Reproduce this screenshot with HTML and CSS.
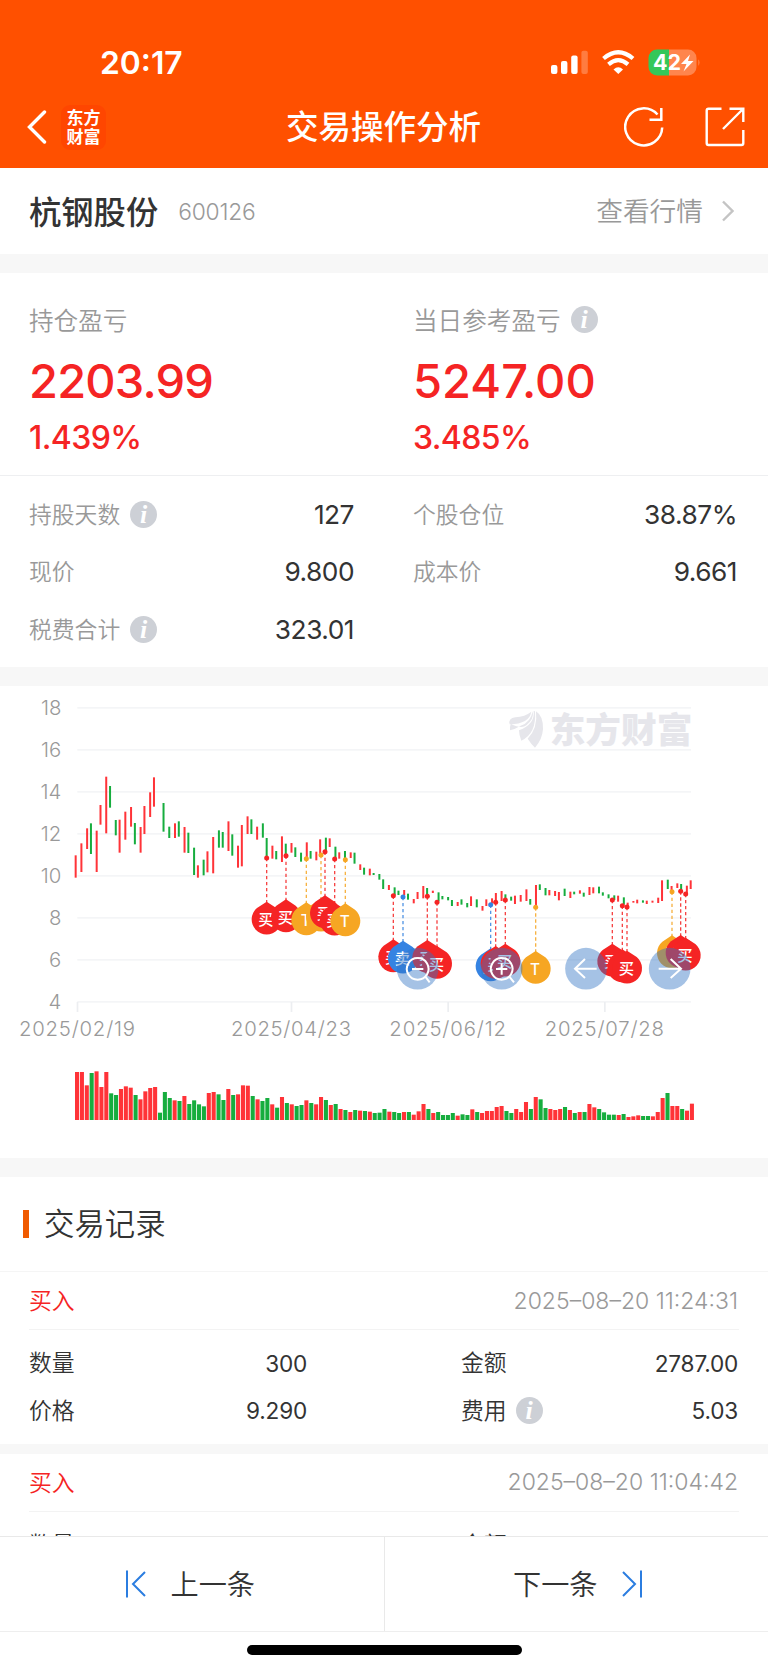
FILE: index.html
```html
<!DOCTYPE html>
<html lang="zh-CN">

<head>
    <meta charset="UTF-8">
    <meta name="viewport" content="width=device-width, initial-scale=1.0">
    <title>交易操作分析</title>
    <link rel="stylesheet" href="styles.css">
</head>

<body>
    <div class="header">
        <div class="status">
            <span class="clock">20:17</span>
            <svg class="statusIcons" viewBox="0 0 150 28" width="150" height="28">
                <g fill="#fff">
                    <rect x="0" y="16" width="6.4" height="9" rx="2" />
                    <rect x="10" y="12" width="6.4" height="13" rx="2" />
                    <rect x="20.2" y="6.5" width="6.4" height="18.5" rx="2" />
                    <rect x="30.4" y="1.7" width="6.4" height="23.3" rx="2" opacity=".25" />
                    <path d="M62.500 20.500 L67.300 25 L72 20.500 Q67.300 16 62.500 20.500Z" />
                </g>
                <g fill="none" stroke="#fff" stroke-width="4.200">
                    <path d="M52.500 9.500 Q67.300 -3 82 9.500" />
                    <path d="M57.500 15.300 Q67.300 7 77 15.300" />
                </g>
                <clipPath id="bat"><rect x="97.500" y="0.500" width="48" height="26" rx="8.500" /></clipPath>
                <g clip-path="url(#bat)">
                    <rect x="97" y="0" width="21" height="28" fill="#34c759" />
                    <rect x="118" y="0" width="30" height="28" fill="#ff854d" />
                </g>
                <path d="M147.300 10.300 q2.500 3 0 6.800z" fill="#ff854d" />
                <text class="batteryText" x="102" y="21.300">42</text>
                <path d="M139 5.500 L130 15 h5.500 L132.500 22.500 L142.500 12 h-5.500z" fill="#fff" />
            </svg>
        </div>
        <div class="navBar">
            <svg class="back" viewBox="0 0 20 34" width="20" height="34">
                <path d="M17.500 2 L2.500 17 L17.500 32" fill="none" stroke="#fff" stroke-width="3.400" stroke-linecap="round" />
            </svg>
            <div class="logo">东方<br>财富</div>
            <div class="pageTitle">交易操作分析</div>
            <svg class="refresh" viewBox="0 0 40 40" width="40" height="40">
                <path d="M38.200 20.500 A18.500 18.500 0 1 1 33.500 7.500 M37.300 1 V12.700 H25.500" fill="none" stroke="#fff" stroke-width="2.500" />
            </svg>
            <svg class="share" viewBox="0 0 40 40" width="40" height="40">
                <path d="M16.500 1.700 H3.500 Q1.700 1.700 1.700 3.500 V36 Q1.700 38 3.500 38 H36.500 Q38.300 38 38.300 36 V23 M38.300 15 V1.700 H24.500 M38 2 L18 22" fill="none" stroke="#fff" stroke-width="2.400" />
            </svg>
        </div>
    </div>

    <div class="stock">
        <span class="stockName">杭钢股份</span>
        <span class="stockCode">600126</span>
        <span class="quote">查看行情</span>
        <svg viewBox="0 0 12 22" width="12" height="22">
            <path d="M1 1.500 L10.500 11 L1 20.500" fill="none" stroke="#c4c4c4" stroke-width="2.400" />
        </svg>
    </div>

    <div class="profit">
        <div class="profitCol">
            <div class="profitLabel">持仓盈亏</div>
            <div class="profitNum tight">2203.99</div>
            <div class="profitRate">1.439%</div>
        </div>
        <div class="profitCol">
            <div class="profitLabel">当日参考盈亏<i class="info">i</i></div>
            <div class="profitNum">5247.00</div>
            <div class="profitRate">3.485%</div>
        </div>
    </div>
    <div class="detail">
        <div class="item"><span>持股天数</span><i class="info">i</i><b>127</b></div>
        <div class="item"><span>个股仓位</span><b>38.87%</b></div>
        <div class="item"><span>现价</span><b>9.800</b></div>
        <div class="item"><span>成本价</span><b>9.661</b></div>
        <div class="item"><span>税费合计</span><i class="info">i</i><b>323.01</b></div>
    </div>

    <!-- K线图 -->
    <div class="chartBox">
        <svg class="chart" id="chart" viewBox="0 18 2304 1416" width="768" height="472">
            <g id="grid"></g>
            <g class="watermark">
                <path d="M1529 133 Q1524 115 1546 112 Q1575 110 1594 95 Q1588 131 1529 133Z M1598 94 Q1603 117 1579 136 Q1565 147 1532 132 Q1529 142 1530 151 Q1546 147 1562 137 Q1592 128 1598 94Z" />
                <path d="M1601 93 Q1606 132 1557 151 Q1557 166 1564 182 Q1610 161 1605 94Z" />
                <path d="M1608 94 Q1614 145 1583 176 Q1594 193 1605 203 Q1627 178 1629 147 Q1630 108 1608 94Z" />
                <text x="1649" y="188" textLength="428">东方财富</text>
            </g>
            <g id="candles"></g>
            <g id="volumes"></g>
            <g id="marks"></g>
            <g class="tools">
                <circle cx="1253" cy="866" r="62.500" />
                <circle cx="1505" cy="866" r="62.500" />
                <circle cx="1758" cy="866" r="62.500" />
                <circle cx="2009" cy="866" r="62.500" />
                <path d="M1253 834 a32.500 32.500 0 1 0 .1 0 M1276 890 L1289 907 M1236 867 H1270" />
                <path d="M1505 834 a32.500 32.500 0 1 0 .1 0 M1528 890 L1542 907 M1488 867 H1522 M1505 850 V884" />
                <path d="M1790 866 H1725 M1755 837 L1725 866 L1755 894" />
                <path d="M1976 866 H2043 M2012 837 L2043 866 L2012 894" />
            </g>
        </svg>
    </div>

    <div class="recordTitle">交易记录</div>
    <div class="record">
        <div class="recordHead"><span class="buy">买入</span><span class="time">2025–08–20 11:24:31</span></div>
        <div class="recordBody">
            <div class="cell"><span>数量</span><b>300</b></div>
            <div class="cell"><span>金额</span><b>2787.00</b></div>
            <div class="cell"><span>价格</span><b>9.290</b></div>
            <div class="cell"><span>费用</span><i class="info">i</i><b>5.03</b></div>
        </div>
    </div>
    <div class="record">
        <div class="recordHead"><span class="buy">买入</span><span class="time">2025–08–20 11:04:42</span></div>
        <div class="recordBody">
            <div class="cell"><span>数量</span></div>
            <div class="cell"><span>金额</span></div>
        </div>
    </div>

    <div class="footer">
        <div class="pager">
            <div class="pagerBtn">
                <svg viewBox="0 0 20 28" width="20" height="28">
                    <path d="M1 0.500 V27.500 M19 2 L7 14 L19 26" fill="none" stroke="#2b7de0" stroke-width="2" />
                </svg>
                <span>上一条</span>
            </div>
            <div class="pagerBtn">
                <span>下一条</span>
                <svg viewBox="0 0 20 28" width="20" height="28">
                    <path d="M19 0.500 V27.500 M1 2 L13 14 L1 26" fill="none" stroke="#2b7de0" stroke-width="2" />
                </svg>
            </div>
        </div>
        <div class="homeBar"></div>
    </div>

    <script src="chart.js"></script>
</body>

</html>
```
FILE: styles.css
```css
body {
    margin: 0;
    height: 1670px;
    overflow: hidden;
    background-color: #f7f7f7;
    color: #333;
    font-family: Inter, "Noto Sans CJK SC", sans-serif;
}

b {
    font-weight: 400;
}

.header {
    height: 168px;
    background-color: #ff5000;
    color: white;
}

.status {
    display: flex;
    align-items: center;
    justify-content: space-between;
    height: 41px;
    padding: 42px 67px 0 100px;
}

.clock {
    font-size: 31.8px;
    font-weight: 600;
}

.batteryText {
    font-size: 21.5px;
    font-weight: 700;
    fill: white;
}

.navBar {
    display: flex;
    align-items: center;
    height: 44px;
    padding: 22px 23px 0 27px;
}

.logo {
    width: 45px;
    height: 43px;
    padding-top: 2px;
    margin-left: 14px;
    border-radius: 9px;
    background-color: #ff4600;
    font-family: "Noto Sans CJK SC", sans-serif;
    font-size: 17px;
    font-weight: 700;
    line-height: 19px;
    text-align: center;
}

.pageTitle {
    flex: 1;
    margin-left: 180px;
    padding-top: 2px;
    font-size: 32.5px;
    font-weight: 500;
    line-height: 44px;
}

.share {
    margin-left: 41px;
}

.stock {
    display: flex;
    align-items: center;
    height: 86px;
    padding: 0 34px 0 29px;
    background-color: white;
    color: #999;
}

.stockName {
    padding-bottom: 3px;
    color: #333;
    font-size: 32.3px;
    font-weight: 500;
}

.stockCode {
    flex: 1;
    margin-left: 20px;
    font-size: 22.8px;
    font-weight: 350;
    letter-spacing: -0.2px;
}

.quote {
    margin-right: 19px;
    padding-bottom: 3px;
    font-size: 26.7px;
    font-weight: 350;
}

.info {
    display: inline-flex;
    align-items: center;
    justify-content: center;
    width: 27px;
    height: 27px;
    margin-left: 10px;
    border-radius: 50%;
    background-color: #cdd0d6;
    color: white;
    font-family: "Liberation Serif", serif;
    font-size: 26px;
    font-weight: 700;
    line-height: 27px;
}

.profit {
    display: flex;
    height: 202px;
    margin-top: 19px;
    border-bottom: 1px solid #eeeff1;
    background-color: white;
}

.profitCol {
    width: 355px;
    padding: 31px 0 0 29px;
}

.profitLabel {
    display: flex;
    align-items: center;
    height: 30px;
    color: #999;
    font-size: 24.6px;
    font-weight: 350;
}

.profitNum {
    margin-top: 19px;
    color: #f52424;
    font-size: 47px;
    font-weight: 500;
    line-height: 56px;
}

.tight {
    letter-spacing: -0.8px;
}

.profitRate {
    margin-top: 11px;
    color: #f52424;
    font-size: 32px;
    font-weight: 500;
    line-height: 36px;
    letter-spacing: -0.6px;
}

.detail {
    display: grid;
    grid-template-columns: 325px 324px;
    grid-auto-rows: 57.3px;
    column-gap: 59px;
    height: 181px;
    padding: 10px 0 0 29px;
    background-color: white;
}

.item {
    display: flex;
    align-items: center;
    color: #999;
    font-size: 22.8px;
    font-weight: 350;
}

.item span {
    padding-bottom: 2px;
}

.item b {
    margin-left: auto;
    color: #333;
    font-size: 26.3px;
    letter-spacing: -0.5px;
}

.chartBox {
    height: 472px;
    margin-top: 19px;
    background-color: white;
}

.chart {
    display: block;
}

.axisText {
    fill: #999;
    font-size: 61px;
    font-weight: 350;
}

.watermark {
    fill: #e6e6eb;
    font-family: "Noto Sans CJK SC", sans-serif;
    font-size: 107px;
    font-weight: 900;
}

.markText {
    fill: white;
    font-size: 46px;
    font-weight: 500;
    text-anchor: middle;
}

.tools circle {
    fill: rgba(50, 116, 195, 0.44);
}

.tools path {
    fill: none;
    stroke: white;
    stroke-width: 6;
}

.recordTitle {
    display: flex;
    align-items: center;
    height: 94px;
    margin-top: 19px;
    padding-left: 23px;
    background-color: white;
    font-size: 30.4px;
    font-weight: 350;
    line-height: 42px;
    border-bottom: 1px solid #f5f5f5;
}

.recordTitle::before {
    content: "";
    width: 6px;
    height: 28px;
    margin-right: 15px;
    background-color: #f05a00;
}

.record {
    height: 172.4px;
    margin-bottom: 9.6px;
    padding: 0 29px;
    background-color: white;
}

.recordHead {
    display: flex;
    align-items: center;
    justify-content: space-between;
    height: 57px;
    padding-right: 1px;
    border-bottom: 1px solid #f3f3f3;
    font-size: 22.8px;
    font-weight: 350;
}

.buy {
    padding-bottom: 2px;
    color: #f52424;
}

.time {
    color: #999;
    font-size: 23px;
}

.recordBody {
    display: grid;
    grid-template-columns: 278px 277px;
    grid-auto-rows: 47.5px;
    column-gap: 154px;
    padding-top: 9.5px;
}

.cell {
    display: flex;
    align-items: center;
    font-size: 22.8px;
    font-weight: 350;
}

.cell span {
    padding-bottom: 3px;
}

.cell b {
    margin-left: auto;
    font-size: 22.6px;
    letter-spacing: -0.2px;
}

.cell .info {
    margin-left: 9px;
}

.footer {
    position: fixed;
    left: 0;
    right: 0;
    bottom: 0;
    height: 133px;
    border-top: 1px solid #e9e9e9;
    background-color: white;
}

.pager {
    display: flex;
    height: 94px;
    border-bottom: 1px solid #eee;
}

.pagerBtn {
    flex: 1;
    display: flex;
    align-items: center;
    justify-content: center;
    gap: 24px;
    padding-right: 2px;
    font-size: 28.2px;
    font-weight: 350;
}

.pagerBtn span {
    padding-bottom: 3px;
}

.pagerBtn + .pagerBtn {
    padding: 0 0 0 2px;
    border-left: 1px solid #e9e9e9;
}

.homeBar {
    width: 275px;
    height: 10px;
    margin: 13px auto 0;
    border-radius: 5px;
    background-color: black;
}
```
FILE: chart.js
```js
const NS = 'http://www.w3.org/2000/svg'
const RED = '#ff3338',
    GREEN = '#16ad3e'

function add(parent, name, attrs, text) {
    let el = document.createElementNS(NS, name)
    for (let k in attrs) el.setAttribute(k, attrs[k])
    if (text) el.textContent = text
    document.getElementById(parent).appendChild(el)
}

// 坐标轴
for (let i = 0; i < 8; i++) {
    let y = 84 + i * 126
    add('grid', 'rect', { x: 232, y: y - 3, width: 1841, height: 5, fill: '#f4f5f7' })
    add('grid', 'text', { class: 'axisText', x: 184, y: y + 22, 'text-anchor': 'end' }, 18 - i * 2)
}
const dates = [[232, '2025/02/19', 348], [874, '2025/04/23', 360], [1344, '2025/06/12', 350], [1814, '2025/07/28', 358]]
dates.forEach(d => {
    add('grid', 'rect', { x: d[0] - 2, y: 966, width: 5, height: 30, fill: '#eceef1' })
    add('grid', 'text', { class: 'axisText', x: d[0] - d[2] / 2 - 1, y: 1068, textLength: d[2] }, d[1])
})

// K线: 颜色 上 下
const candles = `r 526 593,r 490 576,r 445 507,g 430 522,r 452 576,r 375 434,r 290 460,g 318 383,g 420 466,r 419 518,
r 395 479,r 381 440,g 429 493,r 441 518,r 378 462,r 337 411,r 292 380,,g 369 455,g 440 474,
r 430 474,g 424 470,r 441 518,g 458 519,g 503 585,r 556 593,g 539 586,r 514 577,r 471 580,g 451 503,
g 456 503,r 424 513,g 463 527,r 497 563,r 435 559,r 409 462,g 418 462,r 440 479,g 430 473,g 474 536,
r 497 536,g 513 538,r 469 546,g 491 525,r 489 518,g 502 531,g 518 545,r 487 536,g 513 536,r 515 541,
r 478 524,g 473 515,r 475 501,g 500 536,r 517 536,g 513 536,r 517 534,g 518 551,r 553 570,g 563 584,
r 566 586,g 579 585,g 582 599,g 598 627,r 615 630,g 622 646,g 632 645,r 630 646,g 641 659,r 657 670,
r 636 657,r 618 655,g 624 646,r 632 639,g 637 664,g 648 658,g 651 661,g 660 678,r 666 678,g 658 674,
g 669 682,r 649 678,g 658 682,r 678 692,r 658 678,r 655 670,r 639 664,r 633 663,g 643 660,g 650 662,
r 647 672,r 645 665,r 628 663,g 657 674,r 615 676,g 613 630,g 624 646,r 630 646,r 633 648,r 636 661,
g 626 648,r 635 654,g 635 643,r 631 641,g 638 650,r 621 645,r 622 640,g 620 640,g 637 647,g 643 655,
g 646 660,r 647 665,g 652 674,r 668 680,r 663 668,r 659 670,g 661 668,r 662 672,r 662 668,r 653 669,
r 601 663,g 599 627,r 618 634,r 610 624,g 612 630,r 617 640,r 601 627`.split(',')

candles.forEach((c, i) => {
    if (!c.trim()) return
    let [color, top, bottom] = c.trim().split(' ')
    let x = 227 + 5.73 * Math.ceil(i * 14.643 / 5.73)
    add('candles', 'rect', { x: x - 3, y: top, width: 6, height: bottom - top, fill: color == 'r' ? RED : GREEN })
})

// 成交量
const volumes = `r96 r96 r136 g99 r94 r141 r96 g160 g165 r147 r139 r143 g165 r178 r154 r144 r141 g218 g156 g174
r181 g183 r168 g192 g181 g193 g199 r159 r156 g163 g180 r147 g165 r163 r136 r137 g168 r178 g183 g174
r193 g203 r171 g189 r193 g198 g195 r181 g189 r193 r171 g180 r195 g192 r207 g210 r216 g210 r212 g213
r215 g219 g218 g207 r215 g216 g219 r216 g216 r224 r214 r192 g207 r219 g216 g225 g225 g219 r227 g223
g225 r208 g216 r219 r213 r213 r201 r198 g213 g219 r207 r216 r186 g207 r171 g178 g204 r207 r210 r207
g201 r210 g219 r216 g216 r192 r202 g207 g217 g224 g224 r225 g222 r231 r229 r226 g228 g228 r229 r216
r174 g159 r198 r198 g207 r212 r191`.split(/\s+/)

volumes.forEach((v, i) => {
    let top = +v.slice(1)
    add('volumes', 'rect', { x: 225 + i * 14.64, y: 1080 + top, width: 12.2, height: 240 - top, fill: v[0] == 'r' ? RED : GREEN })
})

// 买卖点
const pinColor = { '买': '#f52424', '卖': '#3583e2', 'T': '#f6a623' }
const marks = [
    [800, 534, '买'], [858, 527, '买'], [919, 536, 'T'], [963, 525, 'T'], [975, 515, '买'], [1004, 537, '买'], [1036, 539, 'T'],
    [1180, 647, '买'], [1209, 651, '卖'], [1282, 649, '买'], [1311, 667, '买'], [1472, 674, '卖'], [1487, 667, '买'], [1516, 660, '买'],
    [1607, 682, 'T'], [1837, 660, '买'], [1867, 677, '买'], [1881, 681, '买'], [2016, 635, 'T'], [2042, 634, '买'], [2057, 642, '买']
]
marks.forEach(([x, y, t]) => {
    let color = pinColor[t]
    add('marks', 'circle', { cx: x, cy: y, r: 7.5, fill: color })
    add('marks', 'path', { d: `M${x} ${y} V${y + 134}`, stroke: color, 'stroke-width': 4, 'stroke-dasharray': '10 8', opacity: 0.85 })
})
marks.forEach(([x, y, t]) => {
    let cy = y + 185
    add('marks', 'path', { d: `M${x} ${cy - 54} L${x + 29} ${cy - 35} A45 45 0 1 1 ${x - 29} ${cy - 35}Z`, fill: pinColor[t] })
    add('marks', 'text', { class: 'markText', x: x - 2, y: cy + 17 }, t)
})
```
